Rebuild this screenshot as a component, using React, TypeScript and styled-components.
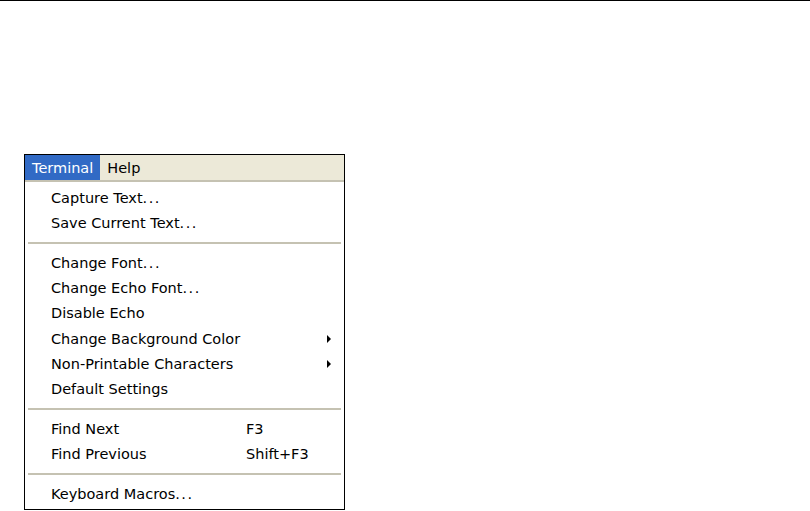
import React from "react";
import styled, { createGlobalStyle } from "styled-components";

const Global = createGlobalStyle`
  html, body { margin: 0; padding: 0; background: #ffffff; }
  body { font-family: "DejaVu Sans", Verdana, sans-serif; }
`;

const Page = styled.div`
  width: 810px;
  height: 511px;
  border-top: 1px solid #000;
  box-sizing: border-box;
  padding: 153px 0 0 24px;
`;

const Menu = styled.div`
  width: 321px;
  box-sizing: border-box;
  border: 1px solid #000;
  background: #fff;
  display: flex;
  flex-direction: column;
`;

const MenuBar = styled.div`
  height: 25px;
  background: #ece9d8;
  border-bottom: 2px solid #c5c2b2;
  display: flex;
  align-items: stretch;
`;

const BarItem = styled.div<{ $active?: boolean }>`
  display: flex;
  align-items: center;
  padding: 0 7px;
  font-size: 14.5px;
  color: ${(p) => (p.$active ? "#fff" : "#000")};
  background: ${(p) => (p.$active ? "#316ac5" : "transparent")};
`;

const List = styled.div`
  display: flex;
  flex-direction: column;
  padding: 3px 0 2px;
`;

const Row = styled.div`
  height: 25.3px;
  display: grid;
  grid-template-columns: 195px 1fr 17px;
  align-items: center;
  padding-left: 26px;
  font-size: 14.5px;
  color: #000;
  white-space: nowrap;
`;

const Dots = styled.span`
  letter-spacing: 1.5px;
`;

const Shortcut = styled.span``;

const Arrow = styled.span`
  width: 0;
  height: 0;
  border-top: 4px solid transparent;
  border-bottom: 4px solid transparent;
  border-left: 4px solid #000;
`;

const Sep = styled.div`
  height: 14.5px;
  display: flex;
  align-items: center;
  padding: 0 3px;
  &::before {
    content: "";
    flex: 1;
    height: 2px;
    background: #c5c2b2;
  }
`;

type Item =
  | { type: "sep" }
  | { type: "item"; label: string; dots?: boolean; shortcut?: string; sub?: boolean };

const items: Item[] = [
  { type: "item", label: "Capture Text", dots: true },
  { type: "item", label: "Save Current Text", dots: true },
  { type: "sep" },
  { type: "item", label: "Change Font", dots: true },
  { type: "item", label: "Change Echo Font", dots: true },
  { type: "item", label: "Disable Echo" },
  { type: "item", label: "Change Background Color", sub: true },
  { type: "item", label: "Non-Printable Characters", sub: true },
  { type: "item", label: "Default Settings" },
  { type: "sep" },
  { type: "item", label: "Find Next", shortcut: "F3" },
  { type: "item", label: "Find Previous", shortcut: "Shift+F3" },
  { type: "sep" },
  { type: "item", label: "Keyboard Macros", dots: true },
];

export default function App() {
  return (
    <>
      <Global />
      <Page>
        <Menu>
          <MenuBar>
            <BarItem $active>Terminal</BarItem>
            <BarItem>Help</BarItem>
          </MenuBar>
          <List>
            {items.map((it, i) =>
              it.type === "sep" ? (
                <Sep key={i} />
              ) : (
                <Row key={i}>
                  <span>
                    {it.label}
                    {it.dots ? <Dots>...</Dots> : null}
                  </span>
                  <Shortcut>{it.shortcut ?? ""}</Shortcut>
                  {it.sub ? <Arrow /> : <span />}
                </Row>
              )
            )}
          </List>
        </Menu>
      </Page>
    </>
  );
}
